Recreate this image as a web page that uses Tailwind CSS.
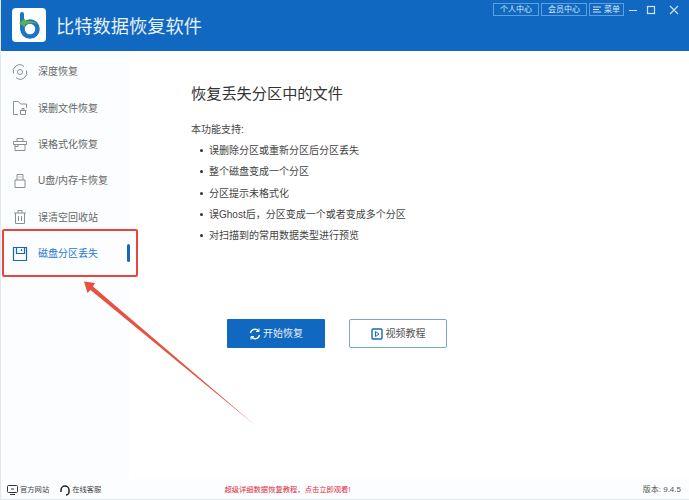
<!DOCTYPE html>
<html lang="zh"><head><meta charset="utf-8"><script src="https://cdn.jsdelivr.net/npm/@tailwindcss/browser@4"></script></head>
<body class="bg-white">
<div class="relative w-[689px] h-[500px] overflow-hidden flex flex-col bg-white border-l border-[#dfe7ef] text-[#555] font-['Liberation_Sans','Noto_Sans_CJK_SC',sans-serif]">
  <header class="h-[51px] shrink-0 bg-[#1168c0] flex items-start text-white">
    <div class="ml-[11px] mt-2 w-[34px] h-[34px] rounded-[4px] bg-white">
      <svg width="34" height="34" viewBox="0 0 34 34" fill="none"><path d="M10 6v15" stroke="#1b75c9" stroke-width="4" stroke-linecap="round"/><circle cx="18" cy="21" r="7.500" stroke="#1b75c9" stroke-width="4.500"/><path d="M7 15l6-4.500v2.500c5-.5 9 .5 12 2.500-4-1-8-.5-12 1v3z" fill="#5fb04a"/></svg>
    </div>
    <div class="ml-[10px] mt-[15px] text-[18.25px] leading-[24px] text-[#e6f1fb]">比特数据恢复软件</div>
    <div class="ml-auto mt-[3px] flex items-center text-[8px] text-[#d6e8f9]">
      <div class="w-[46px] h-[13px] border border-[#5aa0e2] flex items-center justify-center">个人中心</div>
      <div class="ml-[2px] w-[46px] h-[13px] border border-[#5aa0e2] flex items-center justify-center">会员中心</div>
      <div class="ml-[2px] w-[35px] h-[13px] border border-[#5aa0e2] flex items-center justify-center gap-[2px]">
        <svg width="9" height="7" viewBox="0 0 9 7" stroke="#d6e8f9" fill="none"><path d="M0 1h8M0 3.500h6M0 6h8"/></svg>菜单</div>
      <svg class="ml-[4px]" width="10" height="10" viewBox="0 0 10 10" stroke="#cfe3f7"><path d="M1 5.500h8"/></svg>
      <svg class="ml-[8px]" width="10" height="10" viewBox="0 0 10 10" stroke="#cfe3f7" stroke-width="1.200" fill="none"><rect x="1.500" y="1.500" width="7" height="7"/></svg>
      <svg class="ml-[13px] mr-[10px]" width="10" height="10" viewBox="0 0 10 10" stroke="#cfe3f7" stroke-width="1.100"><path d="M1 1l8 8M9 1l-8 8"/></svg>
    </div>
  </header>
  <div class="flex-1 flex min-h-0">
    <aside class="w-[128px] shrink-0 bg-[#fbfdff] pt-[2.500px] text-[10px] text-[#666]">
      <div class="h-[36.4px] flex items-center pl-[11px]">
        <svg class="w-[16px] h-[16px] mr-[10px]" viewBox="0 0 16 16" fill="none" stroke="#8a8f96"><path d="M1.500 9.500A6.500 6.500 0 0 1 12 2.500M14.500 6.500a6.500 6.500 0 0 1-10.500 7"/><circle cx="8" cy="8" r="2.500"/></svg>深度恢复</div>
      <div class="h-[36.4px] flex items-center pl-[11px]">
        <svg class="w-[16px] h-[16px] mr-[10px]" viewBox="0 0 16 16" fill="none" stroke="#8a8f96"><path d="M6 14.500H1.500v-13h5l2 2.500h6v4"/><path d="M8.500 10.500v4h5v-4M8 10.500h6.500M10 10.500V8.500h2v2"/></svg>误删文件恢复</div>
      <div class="h-[36.4px] flex items-center pl-[11px]">
        <svg class="w-[16px] h-[16px] mr-[10px]" viewBox="0 0 16 16" fill="none" stroke="#8a8f96"><path d="M1.500 5.500h13v3h-13zM3 8.500v6h10v-6M5 5.500v-3h6v3M6 8.500v2h-3"/></svg>误格式化恢复</div>
      <div class="h-[36.4px] flex items-center pl-[11px]">
        <svg class="w-[16px] h-[16px] mr-[10px]" viewBox="0 0 16 16" fill="none" stroke="#8a8f96"><path d="M5 7V1.500h6V7M3 7h10v7.500H3z"/><path d="M7 3.500v1M9 3.500v1"/></svg>U盘/内存卡恢复</div>
      <div class="h-[36.4px] flex items-center pl-[11px]">
        <svg class="w-[16px] h-[16px] mr-[10px]" viewBox="0 0 16 16" fill="none" stroke="#8a8f96"><path d="M2 4h12M6 4V1.500h4V4M3.500 4v10.500h9V4M6.500 7v5M9.500 7v5"/></svg>误清空回收站</div>
      <div class="h-[36.4px] flex items-center pl-[11px] relative text-[#1f78cf]">
        <svg class="w-[16px] h-[16px] mr-[10px]" viewBox="0 0 16 16" fill="none" stroke="#1668ba" stroke-width="1.200"><path d="M1.500 1.500h13v13h-13z"/><path d="M4.500 1.500v6h8v-6"/><path d="M9.500 3v2"/></svg>磁盘分区丢失
        <div class="absolute left-[126px] top-[9px] w-[3px] h-[18px] rounded-[2px] bg-[#1668ba]"></div>
      </div>
    </aside>
    <main class="flex-1 pl-[62px] pt-[32px] text-[#444]">
      <h1 class="text-[15.2px] leading-[22px] text-[#333]">恢复丢失分区中的文件</h1>
      <p class="mt-[18px] text-[10px] leading-[14px]">本功能支持:</p>
      <ul class="mt-[3px] text-[10px]">
        <li class="h-[21.300px] flex items-center"><span class="w-[3px] h-[3px] rounded-full bg-[#333] ml-[9px] mr-[6px]"></span>误删除分区或重新分区后分区丢失</li>
        <li class="h-[21.300px] flex items-center"><span class="w-[3px] h-[3px] rounded-full bg-[#333] ml-[9px] mr-[6px]"></span>整个磁盘变成一个分区</li>
        <li class="h-[21.300px] flex items-center"><span class="w-[3px] h-[3px] rounded-full bg-[#333] ml-[9px] mr-[6px]"></span>分区提示未格式化</li>
        <li class="h-[21.300px] flex items-center"><span class="w-[3px] h-[3px] rounded-full bg-[#333] ml-[9px] mr-[6px]"></span>误Ghost后，分区变成一个或者变成多个分区</li>
        <li class="h-[21.300px] flex items-center"><span class="w-[3px] h-[3px] rounded-full bg-[#333] ml-[9px] mr-[6px]"></span>对扫描到的常用数据类型进行预览</li>
      </ul>
      <div class="mt-[73px] ml-[36px] flex gap-[24px] text-[10px]">
        <div class="w-[98px] h-[29px] rounded-[1px] bg-[#1168c0] text-[#e6f1fb] flex items-center justify-center gap-[2px]">
          <svg width="12" height="12" viewBox="0 0 12 12" fill="none" stroke="#fff" stroke-width="1.500"><path d="M1.500 5A4.500 4.500 0 0 1 9.500 3M10.500 7A4.500 4.500 0 0 1 2.500 9"/><path d="M10 0.500V3.500H7M2 11.500V8.500H5" stroke-width="1"/></svg>开始恢复</div>
        <div class="w-[98px] h-[29px] rounded-[2px] border border-[#7aa7d2] bg-white text-[#555] flex items-center justify-center gap-[3px]">
          <svg width="12" height="12" viewBox="0 0 12 12" fill="none"><rect x="1" y="1" width="10" height="10" rx="1" stroke="#1668ba" stroke-width="1.400"/><path d="M4.500 3.500v5l3.500-2.500z" stroke="#1668ba"/></svg>视频教程</div>
      </div>
    </main>
  </div>
  <footer class="h-[21px] shrink-0 bg-[#fbfdff] border-b border-[#e3e9ef] flex items-center pt-[2px] text-[7.300px] text-[#444]">
    <svg class="ml-[6px] mr-[2px]" width="11" height="10" viewBox="0 0 11 10" fill="none" stroke="#333"><rect x="0.500" y="0.500" width="10" height="7" rx="1"/><path d="M3 9.500h5M4 4h3"/></svg>
    <span>官方网站</span>
    <svg class="ml-[11px] mr-[2px]" width="10" height="11" viewBox="0 0 10 11" fill="none" stroke="#222" stroke-width="1.500"><path d="M1 7V5a4 4 0 0 1 8 0v2M9 7c0 2-2 3-3 3"/></svg>
    <span>在线客服</span>
    <span class="ml-[123px] text-[#e02b3c]">超级详细数据恢复教程，点击立即观看!</span>
    <span class="ml-auto mr-[8px] text-[8px] text-[#555]">版本: 9.4.5</span>
  </footer>
  <div class="absolute left-[1px] top-[229px] w-[136px] h-[48px] border-2 border-[#e8453c] rounded-[2px]"></div>
  <svg class="absolute left-0 top-0 pointer-events-none" width="689" height="500" viewBox="0 0 689 500"><path d="M83 281.500 L94 283 L92 286.500 L255 426 L89.500 290 L86.500 293 Z" fill="#e8503f"/></svg>
</div>
</body></html>
